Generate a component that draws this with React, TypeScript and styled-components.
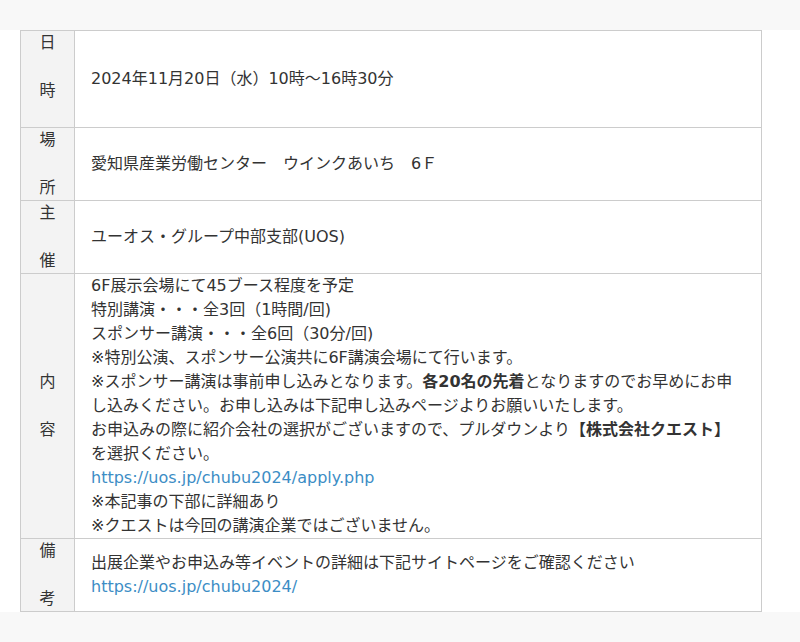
import styled, { createGlobalStyle } from 'styled-components';

const GlobalStyle = createGlobalStyle`
  html, body {
    margin: 0;
    padding: 0;
    background-color: #f8f8f8;
  }

  body {
    font-family: 'DejaVu Sans', 'Noto Sans CJK JP', sans-serif;
    font-size: 16px;
    line-height: 24px;
    color: #333333;
  }
`;

const TopBand = styled.div`
  height: 30px;
  background-color: #f8f8f8;
`;

const BottomBand = styled.div`
  height: 30px;
  background-color: #f8f8f8;
`;

const Article = styled.main`
  background-color: #ffffff;
  padding: 0 38px 0 20px;
`;

const Table = styled.div`
  display: flex;
  flex-direction: column;

  border: 1px solid #cccccc;
  border-bottom: none;
`;

const TableRow = styled.div`
  display: grid;
  grid-template-columns: 54px 1fr;

  border-bottom: 1px solid #cccccc;
`;

const Label = styled.div`
  display: flex;
  flex-direction: column;
  justify-content: center;
  align-items: center;

  background-color: #f3f3f3;
  border-right: 1px solid #cccccc;
`;

const LabelLine = styled.span`
  display: block;
  height: 24px;
`;

const Body = styled.div`
  display: flex;
  align-items: center;

  padding: 0 16px;

  & > p {
    margin: 0;
  }

  & strong {
    font-weight: 700;
  }
`;

const Link = styled.a`
  color: #3c8dc5;
  text-decoration: none;
`;

interface Row {
  label: string[];
  body: React.ReactNode;
}

const rows: Row[] = [
  {
    label: ['日', '', '時', ''],
    body: <p>2024年11月20日（水）10時〜16時30分</p>,
  },
  {
    label: ['場', '', '所'],
    body: <p>愛知県産業労働センター　ウインクあいち　6Ｆ</p>,
  },
  {
    label: ['主', '', '催'],
    body: <p>ユーオス・グループ中部支部(UOS)</p>,
  },
  {
    label: ['内', '', '容'],
    body: (
      <p>
        6F展示会場にて45ブース程度を予定
        <br />
        特別講演・・・全3回（1時間/回)
        <br />
        スポンサー講演・・・全6回（30分/回)
        <br />
        ※特別公演、スポンサー公演共に6F講演会場にて行います。
        <br />
        ※スポンサー講演は事前申し込みとなります。<strong>各20名の先着</strong>
        となりますのでお早めにお申し込みください。お申し込みは下記申し込みページよりお願いいたします。
        <br />
        お申込みの際に紹介会社の選択がございますので、プルダウンより<strong>【株式会社クエスト】</strong>
        を選択ください。
        <br />
        <Link href="#">https://uos.jp/chubu2024/apply.php</Link>
        <br />
        ※本記事の下部に詳細あり
        <br />
        ※クエストは今回の講演企業ではございません。
      </p>
    ),
  },
  {
    label: ['備', '', '考'],
    body: (
      <p>
        出展企業やお申込み等イベントの詳細は下記サイトページをご確認ください
        <br />
        <Link href="#">https://uos.jp/chubu2024/</Link>
      </p>
    ),
  },
];

const App = () => {
  return (
    <>
      <GlobalStyle />
      <TopBand />
      <Article>
        <Table>
          {rows.map((row, i) => (
            <TableRow key={i}>
              <Label>
                {row.label.map((ch, j) => (
                  <LabelLine key={j}>{ch}</LabelLine>
                ))}
              </Label>
              <Body>{row.body}</Body>
            </TableRow>
          ))}
        </Table>
      </Article>
      <BottomBand />
    </>
  );
};

export default App;
